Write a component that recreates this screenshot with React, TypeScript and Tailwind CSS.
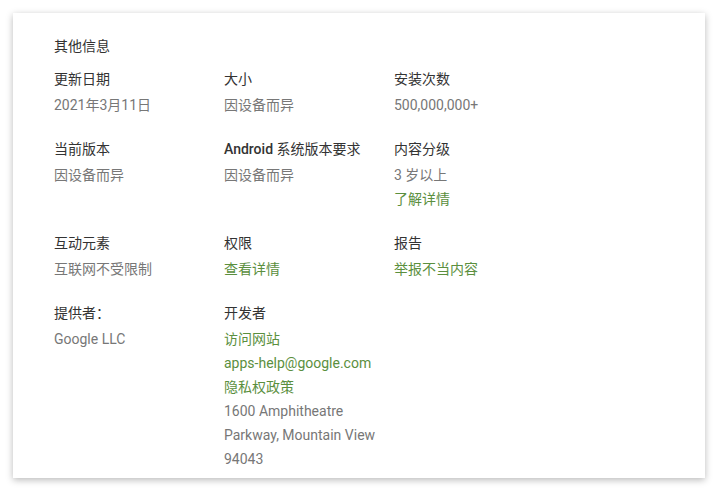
import React from 'react';

type Line = { text: string; link?: boolean };
type Item = { label: React.ReactNode; lines: Line[] };

const rows: Item[][] = [
  [
    { label: '更新日期', lines: [{ text: '2021年3月11日' }] },
    { label: '大小', lines: [{ text: '因设备而异' }] },
    { label: '安装次数', lines: [{ text: '500,000,000+' }] },
  ],
  [
    { label: '当前版本', lines: [{ text: '因设备而异' }] },
    {
      label: (
        <>
          <span className="font-medium">Android</span> 系统版本要求
        </>
      ),
      lines: [{ text: '因设备而异' }],
    },
    { label: '内容分级', lines: [{ text: '3 岁以上' }, { text: '了解详情', link: true }] },
  ],
  [
    { label: '互动元素', lines: [{ text: '互联网不受限制' }] },
    { label: '权限', lines: [{ text: '查看详情', link: true }] },
    { label: '报告', lines: [{ text: '举报不当内容', link: true }] },
  ],
  [
    { label: '提供者：', lines: [{ text: 'Google LLC' }] },
    {
      label: '开发者',
      lines: [
        { text: '访问网站', link: true },
        { text: 'apps-help@google.com', link: true },
        { text: '隐私权政策', link: true },
        { text: '1600 Amphitheatre' },
        { text: 'Parkway, Mountain View' },
        { text: '94043' },
      ],
    },
  ],
];

const InfoCell: React.FC<{ item: Item }> = ({ item }) => (
  <div>
    <div className="text-[#333] leading-6">{item.label}</div>
    <div className="mt-[2px]">
      {item.lines.map((l, i) => (
        <div key={i} className={l.link ? 'text-[#5b8f3e] leading-6' : 'text-[#777] leading-6'}>
          {l.text}
        </div>
      ))}
    </div>
  </div>
);

export default function App() {
  return (
    <div className="w-[719px] h-[492px] bg-white overflow-hidden pt-[13px] pl-[13px]">
      <div
        className="w-[692px] h-[465px] bg-white shadow-[0_2px_7px_rgba(0,0,0,0.28)] pl-[41px] pt-[21px] text-[14px]"
        style={{ fontFamily: 'Roboto, "Noto Sans CJK SC", sans-serif' }}
      >
        <div className="text-[#333] leading-6">其他信息</div>
        <div className="mt-[9px] flex flex-col gap-5">
          {rows.map((row, r) => (
            <div key={r} className="grid grid-cols-[170px_170px_170px]">
              {row.map((item, c) => (
                <InfoCell key={c} item={item} />
              ))}
            </div>
          ))}
        </div>
      </div>
    </div>
  );
}
